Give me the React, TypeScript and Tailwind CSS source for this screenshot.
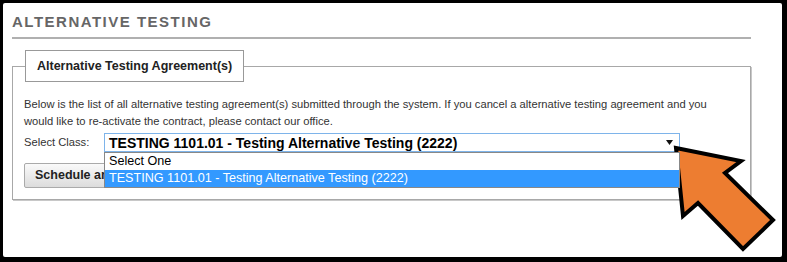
import React from "react";

const font = { fontFamily: '"Liberation Sans", Arial, sans-serif' };

export default function App() {
  return (
    <div className="w-[787px] h-[262px] bg-black pt-[3px] pl-[3px] pr-[5px] pb-[5px]" style={font}>
      <div className="relative h-full bg-white rounded-[2px] pl-[9px] pt-[10px]">
        <div className="w-[739px]">
          <h1 className="text-[15px] font-bold tracking-[1.5px] text-[#666] leading-[18px] pb-[6px] border-b-2 border-[#b0b0b0]">
            ALTERNATIVE TESTING
          </h1>

          <fieldset className="mt-[11px] border border-[#a8a8a8] px-[11px] pt-[14px] pb-[11px] shadow-[1px_1px_0_#c8c8c8]">
            <legend className="ml-[1px] h-[32px] border border-[#999] bg-white px-[11px] text-[12.5px] font-bold leading-[30px] text-[#222]">
              Alternative Testing Agreement(s)
            </legend>

            <p className="text-[11.2px] leading-[17px] text-[#333]">
              Below is the list of all alternative testing agreement(s) submitted through the system. If you cancel a alternative testing agreement and you would like to re-activate the contract, please contact our office.
            </p>

            <div className="mt-[3px] flex items-center">
              <span className="w-[80px] text-[11.2px] text-[#333]">Select Class:</span>
              <div className="relative">
                <div className="flex h-[19px] w-[576px] items-center justify-between border border-[#7eb4ea] bg-white pl-[4px] pr-[6px]">
                  <span className="text-[14px] font-bold leading-none text-black">
                    TESTING 1101.01 - Testing Alternative Testing (2222)
                  </span>
                  <svg width="7" height="5" viewBox="0 0 7 5">
                    <path d="M0 0 H7 L3.5 5 Z" fill="#111" />
                  </svg>
                </div>
                <ul className="absolute left-0 top-full z-10 w-[576px] border border-[#888] bg-white text-[12.6px] leading-[17px]">
                  <li className="pl-[4px] text-black">Select One</li>
                  <li className="bg-[#3399ff] pl-[4px] text-white">TESTING 1101.01 - Testing Alternative Testing (2222)</li>
                </ul>
              </div>
            </div>

            <div className="mt-[11px] flex gap-[10px]">
              <Btn className="w-[125px]">Schedule an Exam</Btn>
              <Btn className="w-[200px]">Add</Btn>
            </div>
          </fieldset>
        </div>

        <svg className="absolute left-[665px] top-[140px]" width="112" height="112" viewBox="0 0 112 112">
          <polygon
            points="8,5 73,18 57,30 105,77 75,106 30,60 15,73"
            fill="#ed7d31"
            stroke="#000"
            strokeWidth="4"
            strokeLinejoin="miter"
          />
        </svg>
      </div>
    </div>
  );
}

function Btn({ children, className = "" }: { children: any; className?: string }) {
  return (
    <button
      className={`h-[25px] overflow-hidden whitespace-nowrap rounded-[2px] border border-[#aaa] bg-gradient-to-b from-[#fafafa] to-[#dcdcdc] px-[10px] text-left text-[12.5px] font-bold text-[#222] ${className}`}
    >
      {children}
    </button>
  );
}
